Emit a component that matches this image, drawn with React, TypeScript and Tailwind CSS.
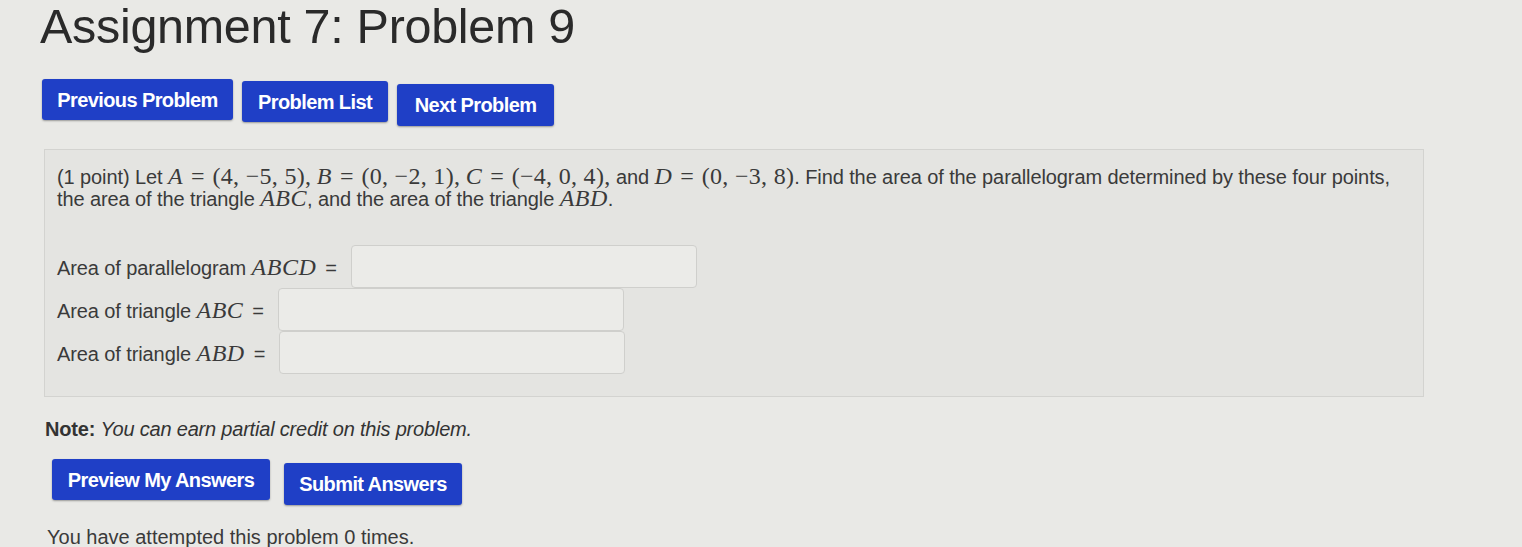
import React from "react";

const serif = { fontFamily: '"Liberation Serif", "Times New Roman", serif' };

// MathJax-ish inline math: bigger serif, italic variables, thick spaces round "="
function V({ children }: { children: React.ReactNode }) {
  return (
    <span className="text-[24px] italic tracking-[0.5px]" style={serif}>
      {children}
    </span>
  );
}

function M({ children }: { children: React.ReactNode }) {
  return (
    <span className="text-[24px] tracking-[0.3px]" style={serif}>
      {children}
    </span>
  );
}

function Eq() {
  return (
    <span className="mx-[8px] text-[24px]" style={serif}>
      =
    </span>
  );
}

function Btn({ label, className = "" }: { label: string; className?: string }) {
  return (
    <button
      className={
        "whitespace-nowrap rounded-[3px] bg-[#1f3fc6] px-0 text-[20px] font-bold tracking-[-0.6px] text-white shadow-[0_1px_2px_rgba(0,0,0,0.35)] " +
        className
      }
    >
      {label}
    </button>
  );
}

function Row({ text, math }: { text: string; math: string }) {
  return (
    <div className="flex items-center gap-[14px]">
      <span className="whitespace-nowrap">
        {text} <V>{math}</V>
        <span className="ml-[9px]">=</span>
      </span>
      <div className="h-[43px] w-[346px] rounded-[4px] border border-[#cfcfcc] bg-[#ebebe8]" />
    </div>
  );
}

export default function App() {
  return (
    <div
      className="h-[547px] w-[1522px] overflow-hidden bg-[#e9e9e6] text-[#333]"
      style={{ fontFamily: '"Liberation Sans", Arial, sans-serif' }}
    >
      <div className="pl-[40px]">
        <h1 className="text-[48.5px] leading-[52px] tracking-[-0.3px] text-[#2a2a2a]">
          Assignment 7: Problem 9
        </h1>

        <div className="mt-[27px] flex gap-[9px] pl-[2px]">
          <Btn label="Previous Problem" className="h-[41px] w-[191px]" />
          <Btn label="Problem List" className="mt-[2px] h-[41px] w-[146px]" />
          <Btn label="Next Problem" className="mt-[5px] h-[42px] w-[157px]" />
        </div>

        <div className="ml-[4px] mr-[98px] mt-[23px] h-[248px] border border-[#d3d3d0] bg-[#e4e4e1] px-[12px] pt-[16px] text-[20px] tracking-[-0.1px] text-[#3a3a3a]">
          <p className="leading-[21px]">
            (1 point) Let <V>A</V>
            <Eq />
            <M>(4, −5, 5),</M> <V>B</V>
            <Eq />
            <M>(0, −2, 1),</M> <V>C</V>
            <Eq />
            <M>(−4, 0, 4),</M> and <V>D</V>
            <Eq />
            <M>(0, −3, 8)</M>. Find the area of the parallelogram determined by
            these four points,
            <br />
            the area of the triangle <V>ABC</V>, and the area of the triangle{" "}
            <V>ABD</V>.
          </p>

          <div className="mt-[35px] flex flex-col">
            <Row text="Area of parallelogram" math="ABCD" />
            <Row text="Area of triangle" math="ABC" />
            <Row text="Area of triangle" math="ABD" />
          </div>
        </div>

        <p className="ml-[5px] mt-[17px] text-[20px] tracking-[-0.2px] text-[#333]">
          <span className="font-bold">Note:</span>{" "}
          <span className="italic">You can earn partial credit on this problem.</span>
        </p>

        <div className="ml-[12px] mt-[15px] flex gap-[14px]">
          <Btn label="Preview My Answers" className="h-[41px] w-[218px]" />
          <Btn label="Submit Answers" className="mt-[4px] h-[42px] w-[178px]" />
        </div>

        <p className="ml-[7px] mt-[17px] text-[20px] text-[#3a3a3a]">
          You have attempted this problem 0 times.
        </p>
      </div>
    </div>
  );
}
